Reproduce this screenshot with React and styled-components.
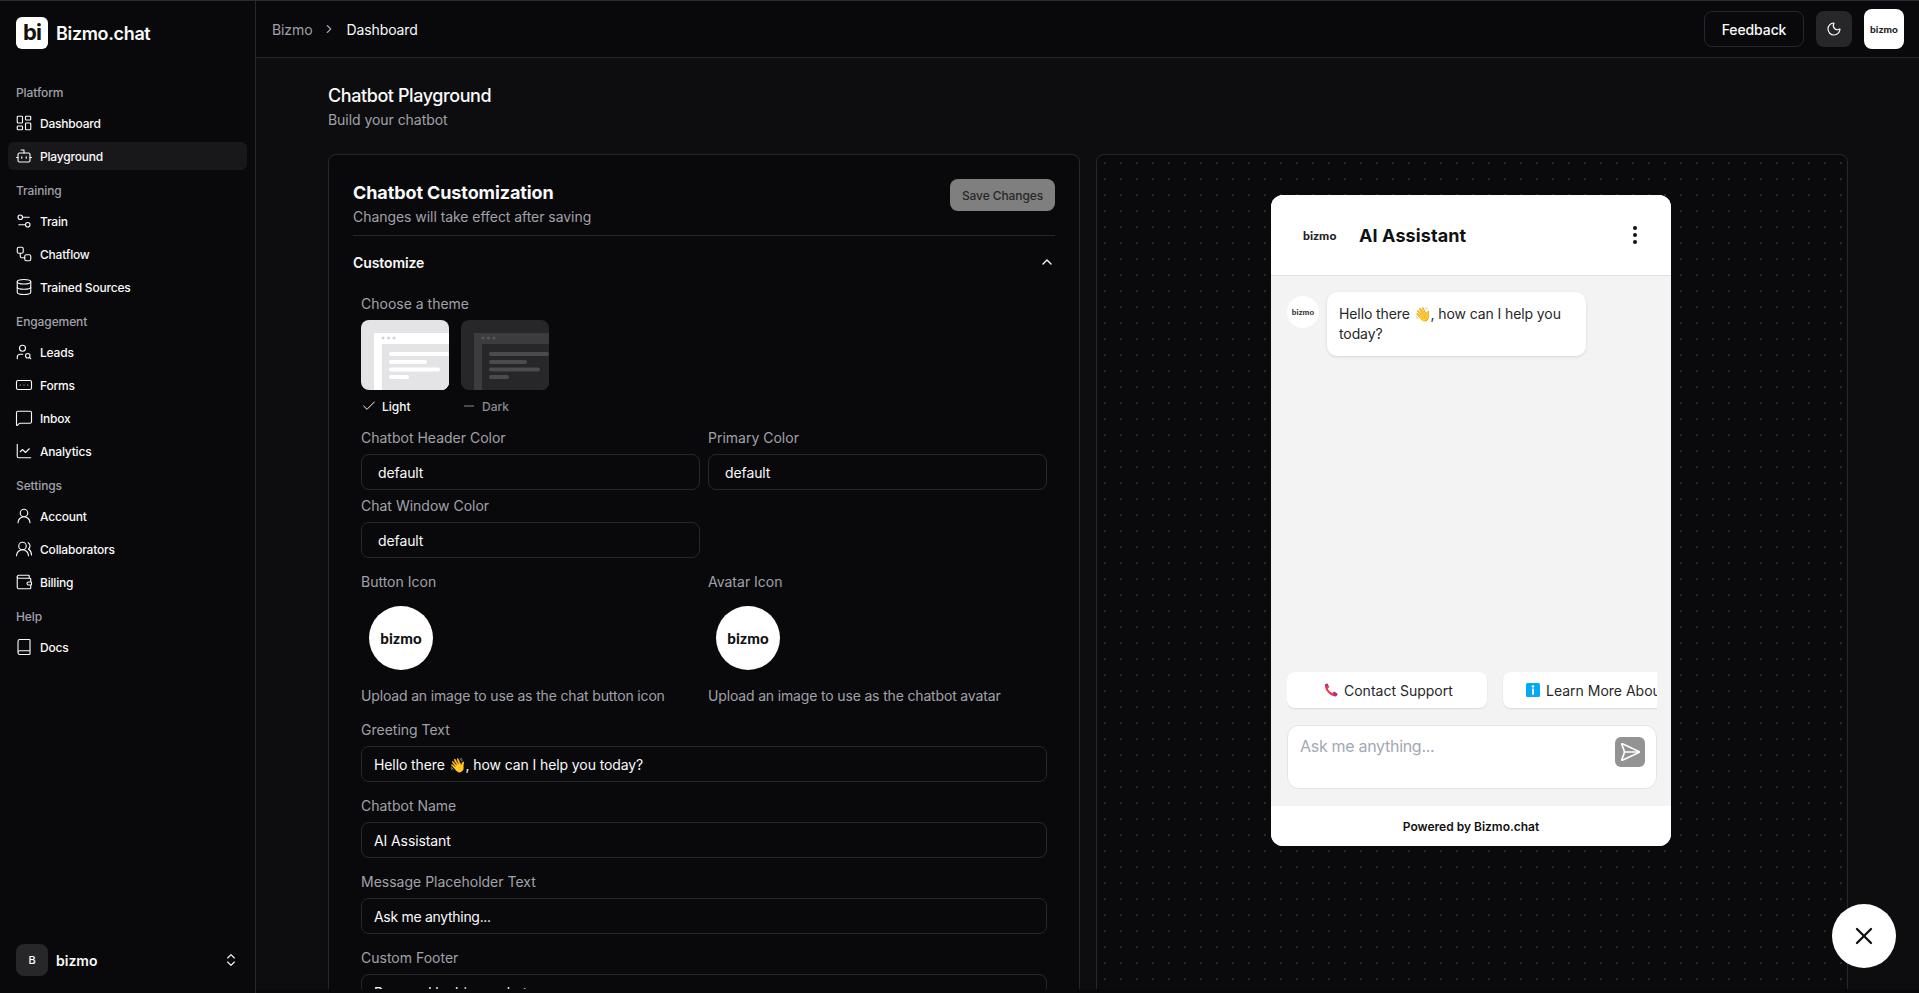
import React from 'react';
import styled, { createGlobalStyle, css } from 'styled-components';
import {
  LayoutDashboard, Bot, Settings2, Workflow, Database, UserSearch, RectangleEllipsis,
  MessageSquare, ChartLine, UserRound, UsersRound, Wallet, Book, ChevronRight, Moon,
  ChevronUp, ChevronsUpDown, Check, Minus, SendHorizontal, X,
} from 'lucide-react';

const GlobalStyle = createGlobalStyle`
  html, body {
    margin: 0;
    height: 100%;
    overflow: hidden;
    background: #09090b;
  }
  * { box-sizing: border-box; }
  body {
    font-family: Inter, "Noto Sans", sans-serif;
    color: #fafafa;
  }
`;

const logoType = css`
  font-family: Lato, Inter, sans-serif;
  font-weight: 900;
  letter-spacing: 0.2px;
`;

const Shell = styled.div`
  display: flex;
  height: 993px;
  overflow: hidden;
  border-top: 1px solid #2e2c33;
`;

const Sidebar = styled.aside`
  width: 256px;
  flex-shrink: 0;
  display: flex;
  flex-direction: column;
  border-right: 1px solid #27272a;
  padding: 16px 8px 17px;
`;

const Brand = styled.div`
  display: flex;
  align-items: center;
  gap: 8px;
  padding: 0 8px;
  height: 32px;
  margin-bottom: 36px;
`;

const BrandMark = styled.div`
  width: 32px;
  height: 32px;
  border-radius: 6px;
  background: #fff;
  color: #111;
  font-size: 22px;
  font-weight: 700;
  letter-spacing: -1px;
  line-height: 30px;
  text-align: center;
`;

const BrandName = styled.div`
  font-size: 18px;
  font-weight: 600;
  letter-spacing: -0.35px;
`;

const NavLabel = styled.div`
  height: 16px;
  line-height: 16px;
  padding-left: 8px;
  margin: ${({ $first }) => ($first ? '0' : '8px')} 0 8px;
  font-size: 12px;
  font-weight: 500;
  letter-spacing: -0.1px;
  color: #a1a1aa;
`;

const NavItem = styled.div`
  height: 28px;
  margin-bottom: 5px;
  display: flex;
  align-items: center;
  gap: 7px;
  padding: 0 7px;
  border-radius: 6px;
  font-size: 12px;
  font-weight: 500;
  letter-spacing: -0.2px;
  color: #fafafa;
  background: ${({ $active }) => ($active ? '#18181b' : 'transparent')};
`;

const UserRow = styled.div`
  margin-top: auto;
  display: flex;
  align-items: center;
  gap: 8px;
  padding: 0 8px;
  height: 32px;
`;

const UserBadge = styled.div`
  width: 32px;
  height: 32px;
  border-radius: 8px;
  background: #27272a;
  font-size: 11px;
  font-weight: 500;
  display: flex;
  align-items: center;
  justify-content: center;
`;

const UserName = styled.div`
  flex: 1;
  font-size: 14px;
  font-weight: 600;
`;

const Main = styled.main`
  flex: 1;
  min-width: 0;
  display: flex;
  flex-direction: column;
  padding-bottom: 4px;
`;

const TopBar = styled.header`
  height: 57px;
  flex-shrink: 0;
  display: flex;
  align-items: center;
  padding: 0 15px 0 16px;
  border-bottom: 1px solid #27272a;
`;

const Crumbs = styled.div`
  display: flex;
  align-items: center;
  gap: 10px;
  font-size: 14px;
  letter-spacing: -0.1px;
  color: #a1a1aa;
  flex: 1;
`;

const CrumbCurrent = styled.span`
  color: #fafafa;
`;

const FeedbackButton = styled.button`
  height: 36px;
  width: 100px;
  border: 1px solid #27272a;
  border-radius: 8px;
  background: transparent;
  color: #fafafa;
  font: 500 14px Inter, sans-serif;
  letter-spacing: -0.1px;
  margin-right: 12px;
`;

const ThemeButton = styled.button`
  width: 36px;
  height: 36px;
  border: 0;
  border-radius: 8px;
  background: #27272a;
  color: #fafafa;
  display: flex;
  align-items: center;
  justify-content: center;
  margin-right: 12px;
`;

const LogoTile = styled.div`
  ${logoType}
  width: 40px;
  height: 40px;
  border-radius: 8px;
  background: #fff;
  color: #222;
  font-size: 10px;
  display: flex;
  align-items: center;
  justify-content: center;
`;

const Content = styled.div`
  flex: 1;
  min-height: 0;
  overflow: hidden;
  padding: 26px 72px 0;
  background: #0d0d0f;
`;

const PageTitle = styled.h1`
  margin: 0;
  font-size: 18px;
  line-height: 24px;
  font-weight: 500;
  letter-spacing: -0.42px;
`;

const PageSub = styled.p`
  margin: 2px 0 24px;
  font-size: 14px;
  line-height: 20px;
  letter-spacing: -0.05px;
  color: #a1a1aa;
`;

const Columns = styled.div`
  display: grid;
  grid-template-columns: 752px 752px;
  gap: 16px;
  align-items: start;
`;

const Card = styled.section`
  border: 1px solid #27272a;
  border-radius: 8px;
  padding: 24px 24px 0;
  height: 900px;
  background: #09090b;
`;

const CardHead = styled.div`
  display: flex;
  justify-content: space-between;
  align-items: flex-start;
  padding-bottom: 8px;
  border-bottom: 1px solid #27272a;
`;

const CardTitle = styled.h2`
  margin: 0;
  font-size: 18px;
  line-height: 28px;
  font-weight: 700;
  letter-spacing: -0.1px;
`;

const CardSub = styled.p`
  margin: 0;
  font-size: 14px;
  line-height: 20px;
  letter-spacing: -0.05px;
  color: #a1a1aa;
`;

const SaveButton = styled.button`
  height: 32px;
  width: 105px;
  border: 0;
  border-radius: 8px;
  background: #7f7f7f;
  color: #27272a;
  font: 500 12px Inter, sans-serif;
  letter-spacing: -0.1px;
`;

const SectionHead = styled.div`
  height: 52px;
  display: flex;
  align-items: center;
  justify-content: space-between;
  font-size: 14px;
  font-weight: 600;
  letter-spacing: -0.1px;
`;

const Fields = styled.div`
  padding: 6px 8px 0;
`;

const Label = styled.div`
  font-size: 14px;
  line-height: 20px;
  font-weight: 400;
  color: #a1a1aa;
  margin-bottom: 6px;
`;

const ThemeRow = styled.div`
  display: flex;
  gap: 12px;
  margin-bottom: 14px;
`;

const ThemeOption = styled.div`
  width: 88px;
`;

const ThemePreview = styled.div`
  width: 88px;
  height: 70px;
  border-radius: 8px;
  overflow: hidden;
`;

const ThemeCaption = styled.div`
  display: flex;
  align-items: center;
  gap: 5px;
  margin-top: 8px;
  height: 16px;
  font-size: 12px;
  font-weight: 500;
  color: ${({ $on }) => ($on ? '#fafafa' : '#8a8a92')};
`;

const TwoCols = styled.div`
  display: grid;
  grid-template-columns: 339px 339px;
  column-gap: 8px;
`;

const Field = styled.div`
  margin-bottom: ${({ $mb }) => $mb}px;
`;

const TextBox = styled.div`
  height: 36px;
  border: 1px solid #27272a;
  border-radius: 8px;
  padding: 0 ${({ $pad }) => $pad || 12}px;
  display: flex;
  align-items: center;
  font-size: 14px;
  letter-spacing: ${({ $tight }) => ($tight ? '-0.3px' : '-0.1px')};
  color: #fafafa;
  white-space: nowrap;
`;

const LogoCircle = styled.div`
  ${logoType}
  width: 64px;
  height: 64px;
  margin: 14px 0 16px 8px;
  border-radius: 50%;
  background: #fff;
  color: #111;
  font-size: 15px;
  display: flex;
  align-items: center;
  justify-content: center;
`;

const Hint = styled.div`
  font-size: 14px;
  line-height: 20px;
  letter-spacing: -0.16px;
  color: #a1a1aa;
`;

const Stage = styled.section`
  border: 1px solid #27272a;
  border-radius: 8px;
  height: 900px;
  padding: 40px 2px 0 0;
  display: flex;
  justify-content: center;
  align-items: flex-start;
  background-color: #0a0a0c;
  background-image: radial-gradient(circle, #2a2a2e 1px, transparent 1.2px);
  background-size: 16px 16px;
`;

const ChatWindow = styled.div`
  width: 400px;
  height: 651px;
  border-radius: 12px;
  overflow: hidden;
  background: #f3f3f3;
  display: flex;
  flex-direction: column;
  color: #18181b;
`;

const ChatHeader = styled.div`
  height: 81px;
  flex-shrink: 0;
  background: #fff;
  border-bottom: 1px solid #e2e2e4;
  display: flex;
  align-items: center;
  padding: 0 34px 0 32px;
`;

const HeaderLogo = styled.div`
  ${logoType}
  width: 32px;
  font-size: 12px;
  color: #222;
  margin-right: 24px;
  text-align: center;
`;

const ChatName = styled.div`
  flex: 1;
  font-size: 18px;
  font-weight: 700;
  letter-spacing: 0.1px;
  color: #111;
`;

const Dots = styled.div`
  display: flex;
  flex-direction: column;
  gap: 3px;
`;

const Dot = styled.span`
  width: 4px;
  height: 4px;
  border-radius: 50%;
  background: #111;
`;

const Thread = styled.div`
  flex: 1;
  padding: 16px 16px 0;
  display: flex;
  gap: 8px;
  align-items: flex-start;
`;

const ChatAvatar = styled.div`
  ${logoType}
  width: 32px;
  height: 32px;
  margin-top: 4px;
  border-radius: 50%;
  background: #fff;
  font-size: 8px;
  color: #333;
  display: flex;
  align-items: center;
  justify-content: center;
`;

const Bubble = styled.div`
  width: 259px;
  padding: 12px;
  background: #fff;
  border-radius: 10px;
  box-shadow: 0 1px 3px rgba(0, 0, 0, 0.12);
  font-size: 14px;
  line-height: 20px;
  letter-spacing: -0.1px;
  color: #27272a;
`;

const Chips = styled.div`
  margin: 0 14px 0 16px;
  display: flex;
  gap: 16px;
  overflow: hidden;
  padding-bottom: 4px;
  flex-shrink: 0;
`;

const Chip = styled.div`
  flex: 0 0 auto;
  width: 200px;
  height: 36px;
  padding-left: ${({ $pl }) => $pl}px;
  background: #fff;
  border-radius: 8px;
  box-shadow: 0 1px 2px rgba(0, 0, 0, 0.1);
  display: flex;
  align-items: center;
  gap: 6px;
  font-size: 14px;
  color: #27272a;
  white-space: nowrap;
`;

const Composer = styled.div`
  position: relative;
  flex-shrink: 0;
  margin: 13px 14px 17px 16px;
  height: 64px;
  border: 1px solid #e5e5e7;
  border-radius: 12px;
  background: #fff;
  padding: 12px;
  font-size: 16px;
  letter-spacing: -0.3px;
  line-height: 16px;
  color: #a3a8b5;
`;

const SendButton = styled.div`
  position: absolute;
  top: 11px;
  right: 11px;
  width: 30px;
  height: 30px;
  border-radius: 6px;
  background: #939393;
  color: #fff;
  display: flex;
  align-items: center;
  justify-content: center;
`;

const PoweredBy = styled.div`
  height: 40px;
  flex-shrink: 0;
  background: #fff;
  display: flex;
  align-items: center;
  justify-content: center;
  font-size: 12px;
  font-weight: 600;
  color: #111;
`;

const CloseFab = styled.button`
  position: fixed;
  right: 23px;
  bottom: 25px;
  width: 64px;
  height: 64px;
  border: 0;
  border-radius: 50%;
  background: #fff;
  color: #111;
  display: flex;
  align-items: center;
  justify-content: center;
`;

const NAV = [
  { label: 'Platform', items: [['Dashboard', LayoutDashboard], ['Playground', Bot, true]] },
  { label: 'Training', items: [['Train', Settings2], ['Chatflow', Workflow], ['Trained Sources', Database]] },
  { label: 'Engagement', items: [['Leads', UserSearch], ['Forms', RectangleEllipsis], ['Inbox', MessageSquare], ['Analytics', ChartLine]] },
  { label: 'Settings', items: [['Account', UserRound], ['Collaborators', UsersRound], ['Billing', Wallet]] },
  { label: 'Help', items: [['Docs', Book]] },
];

function ThemeArt({ dark }) {
  const c = dark
    ? { bg: '#27272a', panel: '#3b3b40', main: '#27272a', line: '#4a4a4f', dot: '#55555a' }
    : { bg: '#e4e4e7', panel: '#fff', main: '#e4e4e7', line: '#fff', dot: '#d4d4d8' };
  return (
    <svg width="88" height="70" viewBox="0 0 88 70">
      <rect width="88" height="70" fill={c.bg} />
      <rect x="13" y="13" width="75" height="57" fill={c.panel} />
      <rect x="21" y="24" width="67" height="46" fill={c.main} />
      <circle cx="22" cy="18" r="1.6" fill={c.dot} />
      <circle cx="27.5" cy="18" r="1.6" fill={c.dot} />
      <circle cx="33" cy="18" r="1.6" fill={c.dot} />
      <rect x="28" y="32" width="60" height="4" rx="2" fill={c.line} />
      <rect x="28" y="40" width="38" height="4" rx="2" fill={c.line} />
      <rect x="28" y="47.5" width="51" height="4" rx="2" fill={c.line} />
      <rect x="28" y="55" width="20" height="4" rx="2" fill={c.line} />
    </svg>
  );
}

function PhoneGlyph() {
  return (
    <svg width="14" height="14" viewBox="0 0 14 14">
      <path d="M1 1.6 3.2.4 5.4 4 3.8 5.4c.8 2 2.4 3.6 4.6 4.6l1.5-1.6L13.6 11l-1.4 2.2C6.4 13.8.4 7.6 1 1.6Z" fill="#f0384f" />
      <path d="M9.9 8.4 13.6 11l-1.4 2.2c-.8.1-1.7 0-2.5-.2Z" fill="#a0309a" />
      <path d="M1 1.6 3.2.4 4.3 2.2 1.2 3.6C1 2.9 1 2.2 1 1.6Z" fill="#a0309a" />
    </svg>
  );
}

function InfoGlyph() {
  return (
    <svg width="14" height="14" viewBox="0 0 14 14">
      <rect width="14" height="14" rx="1.5" fill="#03a9f4" />
      <circle cx="7" cy="3.4" r="1.2" fill="#fff" />
      <rect x="6" y="5.6" width="2" height="6" fill="#fff" />
    </svg>
  );
}

export default function App() {
  return (
    <>
      <GlobalStyle />
      <Shell>
        <Sidebar>
          <Brand>
            <BrandMark>bi</BrandMark>
            <BrandName>Bizmo.chat</BrandName>
          </Brand>
          {NAV.map((group, i) => (
            <div key={group.label}>
              <NavLabel $first={i === 0}>{group.label}</NavLabel>
              {group.items.map(([name, Icon, active]) => (
                <NavItem key={name} $active={active}>
                  <Icon size={18} strokeWidth={1.5} />
                  {name}
                </NavItem>
              ))}
            </div>
          ))}
          <UserRow>
            <UserBadge>B</UserBadge>
            <UserName>bizmo</UserName>
            <ChevronsUpDown size={16} strokeWidth={1.75} />
          </UserRow>
        </Sidebar>
        <Main>
          <TopBar>
            <Crumbs>
              Bizmo
              <ChevronRight size={14} />
              <CrumbCurrent>Dashboard</CrumbCurrent>
            </Crumbs>
            <FeedbackButton>Feedback</FeedbackButton>
            <ThemeButton><Moon size={16} strokeWidth={1.75} /></ThemeButton>
            <LogoTile>bizmo</LogoTile>
          </TopBar>
          <Content>
            <PageTitle>Chatbot Playground</PageTitle>
            <PageSub>Build your chatbot</PageSub>
            <Columns>
              <Card>
                <CardHead>
                  <div>
                    <CardTitle>Chatbot Customization</CardTitle>
                    <CardSub>Changes will take effect after saving</CardSub>
                  </div>
                  <SaveButton>Save Changes</SaveButton>
                </CardHead>
                <SectionHead>
                  Customize
                  <ChevronUp size={16} strokeWidth={2} />
                </SectionHead>
                <Fields>
                  <Label>Choose a theme</Label>
                  <ThemeRow>
                    <ThemeOption>
                      <ThemePreview><ThemeArt /></ThemePreview>
                      <ThemeCaption $on><Check size={16} strokeWidth={1.5} />Light</ThemeCaption>
                    </ThemeOption>
                    <ThemeOption>
                      <ThemePreview><ThemeArt dark /></ThemePreview>
                      <ThemeCaption><Minus size={16} strokeWidth={1.5} />Dark</ThemeCaption>
                    </ThemeOption>
                  </ThemeRow>
                  <TwoCols>
                    <Field $mb={6}>
                      <Label>Chatbot Header Color</Label>
                      <TextBox $pad={16}>default</TextBox>
                    </Field>
                    <Field $mb={6}>
                      <Label>Primary Color</Label>
                      <TextBox $pad={16}>default</TextBox>
                    </Field>
                    <Field $mb={14}>
                      <Label>Chat Window Color</Label>
                      <TextBox $pad={16}>default</TextBox>
                    </Field>
                  </TwoCols>
                  <TwoCols>
                    <Field $mb={14}>
                      <Label>Button Icon</Label>
                      <LogoCircle>bizmo</LogoCircle>
                      <Hint>Upload an image to use as the chat button icon</Hint>
                    </Field>
                    <Field $mb={14}>
                      <Label>Avatar Icon</Label>
                      <LogoCircle>bizmo</LogoCircle>
                      <Hint>Upload an image to use as the chatbot avatar</Hint>
                    </Field>
                  </TwoCols>
                  <Field $mb={14}>
                    <Label>Greeting Text</Label>
                    <TextBox>Hello there 👋, how can I help you today?</TextBox>
                  </Field>
                  <Field $mb={14}>
                    <Label>Chatbot Name</Label>
                    <TextBox>AI Assistant</TextBox>
                  </Field>
                  <Field $mb={14}>
                    <Label>Message Placeholder Text</Label>
                    <TextBox $tight>Ask me anything...</TextBox>
                  </Field>
                  <Field $mb={8}>
                    <Label>Custom Footer</Label>
                    <TextBox>Powered by bizmo.chat</TextBox>
                  </Field>
                </Fields>
              </Card>
              <Stage>
                <ChatWindow>
                  <ChatHeader>
                    <HeaderLogo>bizmo</HeaderLogo>
                    <ChatName>AI Assistant</ChatName>
                    <Dots><Dot /><Dot /><Dot /></Dots>
                  </ChatHeader>
                  <Thread>
                    <ChatAvatar>bizmo</ChatAvatar>
                    <Bubble>Hello there 👋, how can I help you today?</Bubble>
                  </Thread>
                  <Chips>
                    <Chip $pl={37}><PhoneGlyph />Contact Support</Chip>
                    <Chip $pl={23}><InfoGlyph />Learn More About</Chip>
                  </Chips>
                  <Composer>
                    Ask me anything...
                    <SendButton><SendHorizontal size={22} strokeWidth={1.75} /></SendButton>
                  </Composer>
                  <PoweredBy>Powered by Bizmo.chat</PoweredBy>
                </ChatWindow>
              </Stage>
            </Columns>
          </Content>
        </Main>
      </Shell>
      <CloseFab><X size={28} strokeWidth={2} /></CloseFab>
    </>
  );
}
